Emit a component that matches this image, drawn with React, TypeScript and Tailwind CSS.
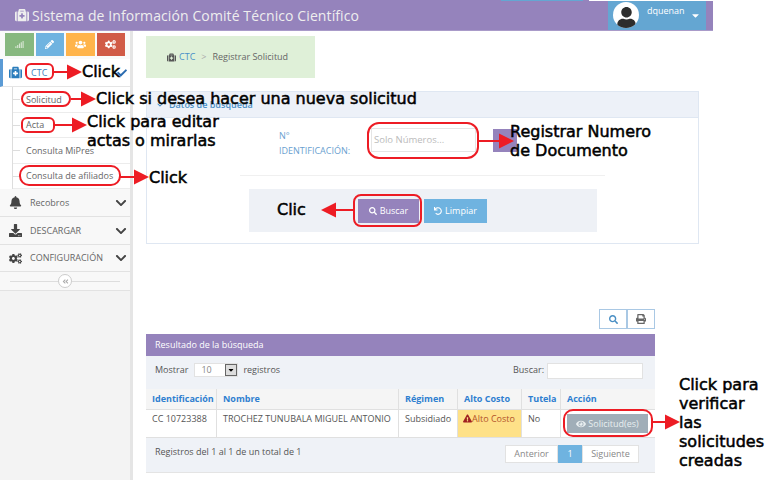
import React from 'react';
import {
  FaAngleDoubleLeft,
  FaBell,
  FaCaretDown,
  FaCheck,
  FaChevronDown,
  FaCogs,
  FaDownload,
  FaExclamationTriangle,
  FaEye,
  FaMedkit,
  FaPencilAlt,
  FaPrint,
  FaSearch,
  FaSignal,
  FaUndo,
  FaUser,
  FaUsers,
} from 'react-icons/fa';

// red callout arrow, drawn over the page
const Arrow = ({ x, y, w, left = false }: { x: number; y: number; w: number; left?: boolean }) => (
  <svg
    className="absolute"
    style={{ left: x, top: y - 8, width: w, height: 16 }}
    viewBox={`0 0 ${w} 16`}
  >
    {left ? (
      <>
        <rect x="12" y="7" width={w - 12} height="2" fill="#ed1c24" />
        <polygon points="0,8 15,0.5 15,15.5" fill="#ed1c24" />
      </>
    ) : (
      <>
        <rect x="0" y="7" width={w - 12} height="2" fill="#ed1c24" />
        <polygon points={`${w},8 ${w - 15},0.5 ${w - 15},15.5`} fill="#ed1c24" />
      </>
    )}
  </svg>
);

const Ring = ({ x, y, w, h, r = 'rounded-md' }: { x: number; y: number; w: number; h: number; r?: string }) => (
  <div
    className={`absolute border-2 border-[#ed1c24] ${r}`}
    style={{ left: x, top: y, width: w, height: h }}
  />
);

const Note = ({ x, y, children }: { x: number; y: number; children: React.ReactNode }) => (
  <div
    className="absolute whitespace-pre font-['DejaVu_Sans',sans-serif] text-[16px] leading-[19px] text-black [-webkit-text-stroke:0.5px_black]"
    style={{ left: x, top: y }}
  >
    {children}
  </div>
);

const SubItem = ({ label, h }: { label: string; h: string }) => (
  <div className={`flex items-center border-b border-[#ececec] text-[9px] text-[#666] ${h}`}>
    <span className="mr-[6px] h-px w-[7px] bg-[#ddd]" />
    {label}
  </div>
);

const NavRow = ({ icon, label, h }: { icon: React.ReactNode; label: string; h: string }) => (
  <div className={`flex items-center border-b border-[#e2e2e2] bg-[#f8f8f8] pl-[9px] pr-[3px] text-[9px] text-[#666] ${h}`}>
    <span className="flex w-[21px] text-[13px] text-[#444]">{icon}</span>
    <span className="flex-1">{label}</span>
    <FaChevronDown className="text-[12px] text-[#444]" />
  </div>
);

const Sidebar = () => (
  <aside className="w-[133px] shrink-0 border-r-[3px] border-[#e5e5e5] bg-[#f3f3f3]">
    <div className="flex h-[28px] gap-[2px] bg-[#fafafa] px-[5px] pt-[2px]">
      <div className="flex h-[23px] w-[29px] items-center justify-center bg-[#87b87f] text-[9px] text-[#d8e6d4]">
        <FaSignal />
      </div>
      <div className="flex h-[23px] w-[29px] items-center justify-center bg-[#6fb3e0] text-[9px] text-white">
        <FaPencilAlt />
      </div>
      <div className="flex h-[23px] w-[29px] items-center justify-center bg-[#ffb44b] text-[11px] text-white">
        <FaUsers />
      </div>
      <div className="flex h-[23px] w-[29px] items-center justify-center bg-[#d15b47] text-[11px] text-white">
        <FaCogs />
      </div>
    </div>
    <div className="flex h-[28px] items-center border-b border-l-[3px] border-[#e5e5e5] border-l-[#5b9bd5] bg-white pl-[6px] pr-[3px] text-[9px] text-[#3c7fc0]">
      <FaMedkit className="mr-[8px] text-[13px] text-[#2b7dbc]" />
      <span className="flex-1 pl-[1px]">CTC</span>
      <FaCheck className="text-[10px] text-[#2b6cb0]" />
    </div>
    <div className="bg-white pl-[12px]">
      <div className="border-l border-[#ddd]">
        <SubItem label="Solicitud" h="h-[26px]" />
        <SubItem label="Acta" h="h-[25px]" />
        <SubItem label="Consulta MiPres" h="h-[26px]" />
        <SubItem label="Consulta de afiliados" h="h-[25px]" />
      </div>
    </div>
    <NavRow icon={<FaBell />} label="Recobros" h="h-[28px]" />
    <NavRow icon={<FaDownload />} label="DESCARGAR" h="h-[28px]" />
    <NavRow icon={<FaCogs />} label="CONFIGURACIÓN" h="h-[27px]" />
    <div className="flex h-[19px] items-center border-b border-[#e2e2e2] bg-[#f8f8f8] px-[10px]">
      <div className="h-px flex-1 bg-[#ddd]" />
      <div className="flex h-[14px] w-[14px] items-center justify-center rounded-full border border-[#ccc] bg-white text-[7px] text-[#aaa]">
        <FaAngleDoubleLeft />
      </div>
      <div className="h-px flex-1 bg-[#ddd]" />
    </div>
  </aside>
);

const SearchPanel = () => (
  <section className="mt-[13px] h-[153px] w-[553px] border border-[#dfe7f2]">
    <div className="flex h-[26px] items-start border-b border-[#dfe7f2] bg-[#edf1f8] pl-[10px] pt-[6px] text-[9px] font-semibold text-[#4a90c8]">
      <FaChevronDown className="mr-[6px] mt-[4px] text-[6px]" />
      Datos de búsqueda
    </div>
    <div className="flex items-start pl-[132px] pt-[10px]">
      <div className="w-[92px] text-[9px] leading-[15px] text-[#6a9fd0]">
        N°
        <br />
        IDENTIFICACIÓN:
      </div>
      <div className="flex h-[24px] w-[105px] items-center border border-[#e5e5e5] bg-white pl-[2px] text-[9.5px] text-[#bbb]">
        Solo Números...
      </div>
    </div>
    <div className="ml-[93px] mt-[17px] h-px w-[365px] bg-[#f0f0f0]" />
    <div className="ml-[102px] mt-[13px] flex h-[43px] w-[348px] items-center gap-[5px] bg-[#eef1f6] pl-[109px]">
      <div className="flex h-[24px] w-[61px] items-center justify-center gap-[3px] bg-[#9583bc] text-[9px] text-white">
        <FaSearch className="text-[8px]" /> Buscar
      </div>
      <div className="flex h-[24px] w-[63px] items-center justify-center gap-[3px] bg-[#6fb3e0] text-[9px] text-white">
        <FaUndo className="text-[8px]" /> Limpiar
      </div>
    </div>
  </section>
);

const cols = 'grid grid-cols-[71px_182px_59px_64px_39px_1fr]';

const ResultsTable = () => (
  <section className="w-[509px]">
    <div className="mb-[5px] flex justify-end">
      <div className="flex h-[20px] w-[28px] items-center justify-center border border-[#a9c8e4] text-[9px] text-[#4a8fc4]">
        <FaSearch />
      </div>
      <div className="flex h-[20px] w-[28px] items-center justify-center border border-[#a9c8e4] text-[10px] text-[#666]">
        <FaPrint />
      </div>
    </div>
    <div className="flex h-[22px] items-center bg-[#9583bc] pl-[9px] text-[9px] text-white">Resultado de la búsqueda</div>
    <div className="flex h-[33px] items-start bg-[#eff2f7] pl-[9px] pr-[12px] pt-[7px] text-[9px] text-[#555]">
      <span>Mostrar</span>
      <div className="ml-[6px] flex h-[14px] w-[44px] items-center justify-between border border-[#e2e2e2] bg-white pl-[6px] text-[#888]">
        10
        <span className="flex h-[12px] w-[12px] items-center justify-center border border-[#666] bg-[#ddd] text-[8px] text-black">
          <FaCaretDown />
        </span>
      </div>
      <span className="ml-[5px] flex-1">registros</span>
      <span>Buscar:</span>
      <div className="ml-[3px] h-[16px] w-[96px] border border-[#e2e2e2] bg-white" />
    </div>
    <div className={`${cols} h-[21px] border-b border-[#e0e0e0] bg-[#f5f5f5] text-[9px] font-bold text-[#2f7fd0]`}>
      <div className="flex items-center border-r border-[#e0e0e0] pl-[6px]">Identificación</div>
      <div className="flex items-center border-r border-[#e0e0e0] pl-[6px]">Nombre</div>
      <div className="flex items-center border-r border-[#e0e0e0] pl-[6px]">Régimen</div>
      <div className="flex items-center border-r border-[#e0e0e0] pl-[6px]">Alto Costo</div>
      <div className="flex items-center border-r border-[#e0e0e0] pl-[6px]">Tutela</div>
      <div className="flex items-center pl-[6px]">Acción</div>
    </div>
    <div className={`${cols} h-[28px] border-b border-[#e0e0e0] bg-white text-[9px] text-[#555]`}>
      <div className="border-r border-[#e0e0e0] pl-[6px] pt-[2px]">CC 10723388</div>
      <div className="whitespace-nowrap border-r border-[#e0e0e0] pl-[6px] pt-[2px]">TROCHEZ TUNUBALA MIGUEL ANTONIO</div>
      <div className="border-r border-[#e0e0e0] pl-[6px] pt-[2px]">Subsidiado</div>
      <div className="flex items-start whitespace-nowrap border-r border-[#e0e0e0] bg-[#fee188] pl-[5px] pt-[2px] text-[#b3532a]">
        <FaExclamationTriangle className="mt-[2px] text-[9px] text-[#a02020]" />
        Alto Costo
      </div>
      <div className="border-r border-[#e0e0e0] pl-[6px] pt-[2px]">No</div>
      <div className="pl-[6px] pt-[4px]">
        <div className="flex h-[19px] w-[81px] items-center justify-center gap-[2px] bg-[#a0aeb8] text-[9px] text-[#e8eef0]">
          <FaEye className="text-[10px]" /> Solicitud(es)
        </div>
      </div>
    </div>
    <div className="flex h-[35px] items-start justify-between border-b border-[#e4e4e4] bg-[#eff2f7] pl-[9px] pr-[16px] pt-[7px] text-[9px] text-[#555]">
      <span>Registros del 1 al 1 de un total de 1</span>
      <div className="flex h-[18px] items-stretch text-[#888]">
        <span className="flex w-[53px] items-center justify-center border border-[#e2e2e2] bg-white">Anterior</span>
        <span className="flex w-[24px] items-center justify-center bg-[#6fb3e0] text-white">1</span>
        <span className="flex w-[57px] items-center justify-center border border-[#e2e2e2] bg-white">Siguiente</span>
      </div>
    </div>
  </section>
);

export default function App() {
  return (
    <div className="relative h-[480px] w-[767px] overflow-hidden bg-white font-['Open_Sans',sans-serif]">
      <header className="flex h-[31px] w-[713px] items-center justify-between border-b border-[#a99bc9] bg-[#9583bc] pl-[15px] pr-[7px] text-white">
        <div className="flex items-center gap-[3px] text-[14px] tracking-[0.1px] text-[#eee]">
          <FaMedkit className="text-[14px]" />
          Sistema de Información Comité Técnico Científico
        </div>
        <div className="flex h-[30px] w-[98px] items-start self-end bg-[#64a6d2] pl-[5px] pt-[2px] text-[9px]">
          <div className="flex h-[26px] w-[26px] items-end justify-center overflow-hidden rounded-full bg-white text-[21px] text-[#2d2d2d]">
            <FaUser />
          </div>
          <span className="ml-[8px] mt-[2px]">dquenan</span>
          <FaCaretDown className="ml-[5px] mt-[8px] text-[11px]" />
        </div>
      </header>

      {/* stray 1px strips along the top edge of the capture */}
      <div className="absolute left-[501px] top-0 h-px w-[82px] bg-[#64a6d2]" />
      <div className="absolute left-[589px] top-0 h-px w-[178px] bg-white" />

      <div className="flex h-[449px]">
        <Sidebar />
        <main className="ml-[13px] flex-1 pt-[5px]">
          <div className="flex h-[42px] w-[169px] items-center gap-[3px] bg-[#dff0d8] pl-[21px] text-[9px] text-[#666]">
            <FaMedkit className="text-[9px] text-[#555]" />
            <span className="text-[#4a90c8]">CTC</span>
            <span className="mx-[3px] text-[#aaa]">&gt;</span>
            Registrar Solicitud
          </div>
          <SearchPanel />
          <div className="mt-[65px]">
            <ResultsTable />
          </div>
        </main>
      </div>

      {/* leftover purple block behind the callout */}
      <div className="absolute left-[493px] top-[129px] h-[23px] w-[24px] bg-[#9583bc]" />

      <Ring x={25} y={63} w={29} h={17} />
      <Arrow x={54} y={72} w={28} />
      <Note x={82} y={62}>Click</Note>

      <Ring x={21} y={91} w={50} h={16} r="rounded-lg" />
      <Arrow x={71} y={99} w={25} />
      <Note x={96} y={89}>Click si desea hacer una nueva solicitud</Note>

      <Ring x={21} y={117} w={34} h={16} />
      <Arrow x={54} y={125} w={33} />
      <Note x={87} y={112}>{'Click para editar\nactas o mirarlas'}</Note>

      <Ring x={19} y={165} w={102} h={21} r="rounded-[10px]" />
      <Arrow x={120} y={177} w={29} />
      <Note x={149} y={168}>Click</Note>

      <Ring x={367} y={122} w={112} h={37} r="rounded-[12px]" />
      <Arrow x={479} y={141} w={35} />
      <Note x={510} y={122}>{'Registrar Numero\nde Documento'}</Note>

      <Ring x={353} y={194} w={69} h={33} r="rounded-lg" />
      <Arrow x={321} y={210} w={32} left />
      <Note x={277} y={200}>Clic</Note>

      <Ring x={563} y={409} w={90} h={28} r="rounded-[10px]" />
      <Arrow x={653} y={422} w={27} />
      <Note x={679} y={375}>{'Click para\nverificar\nlas\nsolicitudes\ncreadas'}</Note>
    </div>
  );
}
